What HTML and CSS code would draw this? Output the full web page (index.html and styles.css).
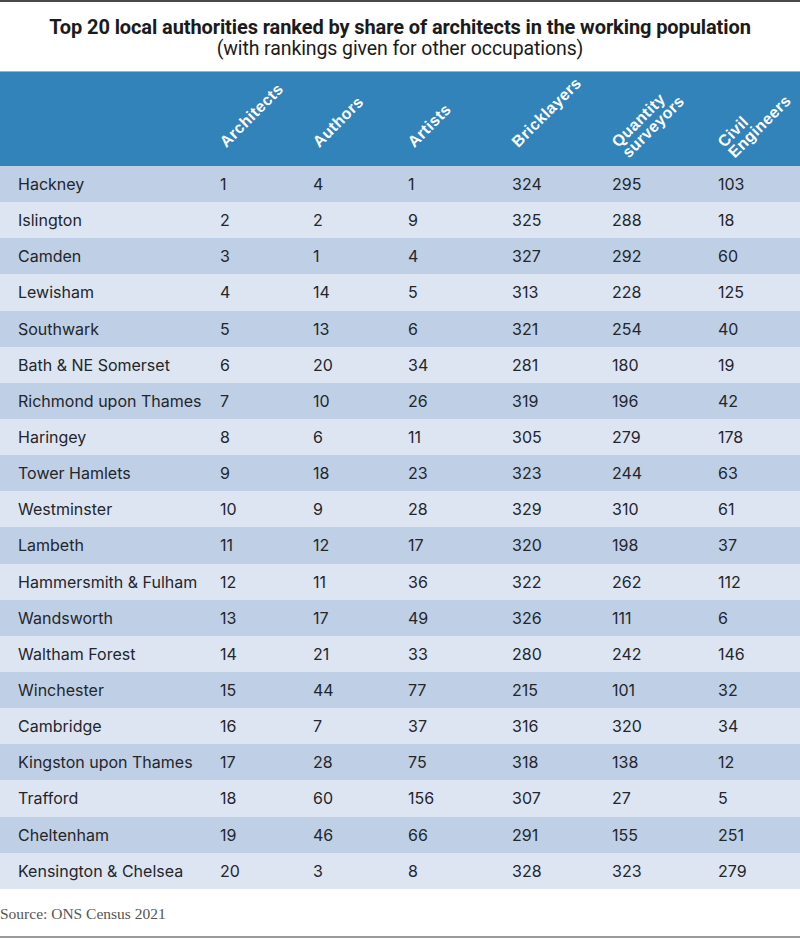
FILE: index.html
```html
<!DOCTYPE html>
<html lang="en">
<head>
<meta charset="utf-8">
<title>Top 20 local authorities</title>
<link rel="stylesheet" href="styles.css">
</head>
<body>
<div class="page">
  <header class="titles">
    <h1 class="title">Top 20 local authorities ranked by share of architects in the working population</h1>
    <p class="subtitle">(with rankings given for other occupations)</p>
  </header>
  <table class="ranks">
    <colgroup>
      <col class="c-name"><col class="c1"><col class="c2"><col class="c3"><col class="c4"><col class="c5"><col class="c6">
    </colgroup>
    <thead>
      <tr>
        <th></th>
        <th><div class="lab">Architects</div></th>
        <th><div class="lab">Authors</div></th>
        <th><div class="lab">Artists</div></th>
        <th><div class="lab">Bricklayers</div></th>
        <th><div class="lab">Quantity<br>surveyors</div></th>
        <th><div class="lab">Civil<br>Engineers</div></th>
      </tr>
    </thead>
    <tbody>
      <tr><td>Hackney</td><td>1</td><td>4</td><td>1</td><td>324</td><td>295</td><td>103</td></tr>
      <tr><td>Islington</td><td>2</td><td>2</td><td>9</td><td>325</td><td>288</td><td>18</td></tr>
      <tr><td>Camden</td><td>3</td><td>1</td><td>4</td><td>327</td><td>292</td><td>60</td></tr>
      <tr><td>Lewisham</td><td>4</td><td>14</td><td>5</td><td>313</td><td>228</td><td>125</td></tr>
      <tr><td>Southwark</td><td>5</td><td>13</td><td>6</td><td>321</td><td>254</td><td>40</td></tr>
      <tr><td>Bath &amp; NE Somerset</td><td>6</td><td>20</td><td>34</td><td>281</td><td>180</td><td>19</td></tr>
      <tr><td>Richmond upon Thames</td><td>7</td><td>10</td><td>26</td><td>319</td><td>196</td><td>42</td></tr>
      <tr><td>Haringey</td><td>8</td><td>6</td><td>11</td><td>305</td><td>279</td><td>178</td></tr>
      <tr><td>Tower Hamlets</td><td>9</td><td>18</td><td>23</td><td>323</td><td>244</td><td>63</td></tr>
      <tr><td>Westminster</td><td>10</td><td>9</td><td>28</td><td>329</td><td>310</td><td>61</td></tr>
      <tr><td>Lambeth</td><td>11</td><td>12</td><td>17</td><td>320</td><td>198</td><td>37</td></tr>
      <tr><td>Hammersmith &amp; Fulham</td><td>12</td><td>11</td><td>36</td><td>322</td><td>262</td><td>112</td></tr>
      <tr><td>Wandsworth</td><td>13</td><td>17</td><td>49</td><td>326</td><td>111</td><td>6</td></tr>
      <tr><td>Waltham Forest</td><td>14</td><td>21</td><td>33</td><td>280</td><td>242</td><td>146</td></tr>
      <tr><td>Winchester</td><td>15</td><td>44</td><td>77</td><td>215</td><td>101</td><td>32</td></tr>
      <tr><td>Cambridge</td><td>16</td><td>7</td><td>37</td><td>316</td><td>320</td><td>34</td></tr>
      <tr><td>Kingston upon Thames</td><td>17</td><td>28</td><td>75</td><td>318</td><td>138</td><td>12</td></tr>
      <tr><td>Trafford</td><td>18</td><td>60</td><td>156</td><td>307</td><td>27</td><td>5</td></tr>
      <tr><td>Cheltenham</td><td>19</td><td>46</td><td>66</td><td>291</td><td>155</td><td>251</td></tr>
      <tr><td>Kensington &amp; Chelsea</td><td>20</td><td>3</td><td>8</td><td>328</td><td>323</td><td>279</td></tr>
    </tbody>
  </table>
  <footer class="source">Source: ONS Census 2021</footer>
</div>
</body>
</html>
```
FILE: styles.css
```css
html, body {
  margin: 0;
  padding: 0;
  background: #ffffff;
}
.page {
  width: 800px;
  height: 938px;
  box-sizing: border-box;
  border-top: 2px solid #4a4a4a;
  border-bottom: 2px solid #9a9a9a;
  display: flex;
  flex-direction: column;
  overflow: hidden;
}
.titles {
  height: 69px;
  text-align: center;
  padding-top: 14px;
  box-sizing: border-box;
}
.title {
  margin: 0;
  font-family: Roboto, "Liberation Sans", sans-serif;
  font-weight: 700;
  font-size: 20px;
  line-height: 22px;
  letter-spacing: -0.1px;
  color: #1b1b1b;
}
.subtitle {
  margin: 0;
  font-family: Roboto, "Liberation Sans", sans-serif;
  font-weight: 400;
  font-size: 19.5px;
  line-height: 22px;
  letter-spacing: -0.1px;
  color: #1b1b1b;
}
.ranks {
  border-collapse: collapse;
  table-layout: fixed;
  width: 800px;
  font-family: Inter, "Liberation Sans", sans-serif;
  font-size: 16px;
  color: #23262b;
}
.c-name { width: 220px; }
.c1 { width: 93px; }
.c2 { width: 95px; }
.c3 { width: 104px; }
.c4 { width: 100px; }
.c5 { width: 106px; }
.c6 { width: 82px; }
.ranks thead tr {
  background: #3283b9;
  border-top: 1px solid #8ab8dc;
}
.ranks th {
  height: 94px;
  padding: 0;
  vertical-align: top;
  text-align: left;
  overflow: visible;
}
.lab {
  margin-top: 67px;
  margin-left: -3px;
  width: 0;
  height: 0;
  white-space: nowrap;
  transform: rotate(-45deg);
  transform-origin: 0 0;
  font-family: "Liberation Sans", Arial, sans-serif;
  font-weight: 700;
  font-size: 16px;
  letter-spacing: 0.4px;
  line-height: 15px;
  color: #ffffff;
}
.ranks tbody tr {
  height: 36.15px;
}
.ranks tbody tr:nth-child(odd) { background: #bfcfe5; }
.ranks tbody tr:nth-child(even) { background: #dde5f2; }
.ranks td {
  padding: 0;
  vertical-align: middle;
  white-space: nowrap;
}
.ranks td:first-child {
  padding-left: 18px;
}
.source {
  margin-top: auto;
  height: 44px;
  box-sizing: border-box;
  padding-top: 13px;
  font-family: "Liberation Serif", serif;
  font-size: 15.5px;
  color: #555555;
}
```
